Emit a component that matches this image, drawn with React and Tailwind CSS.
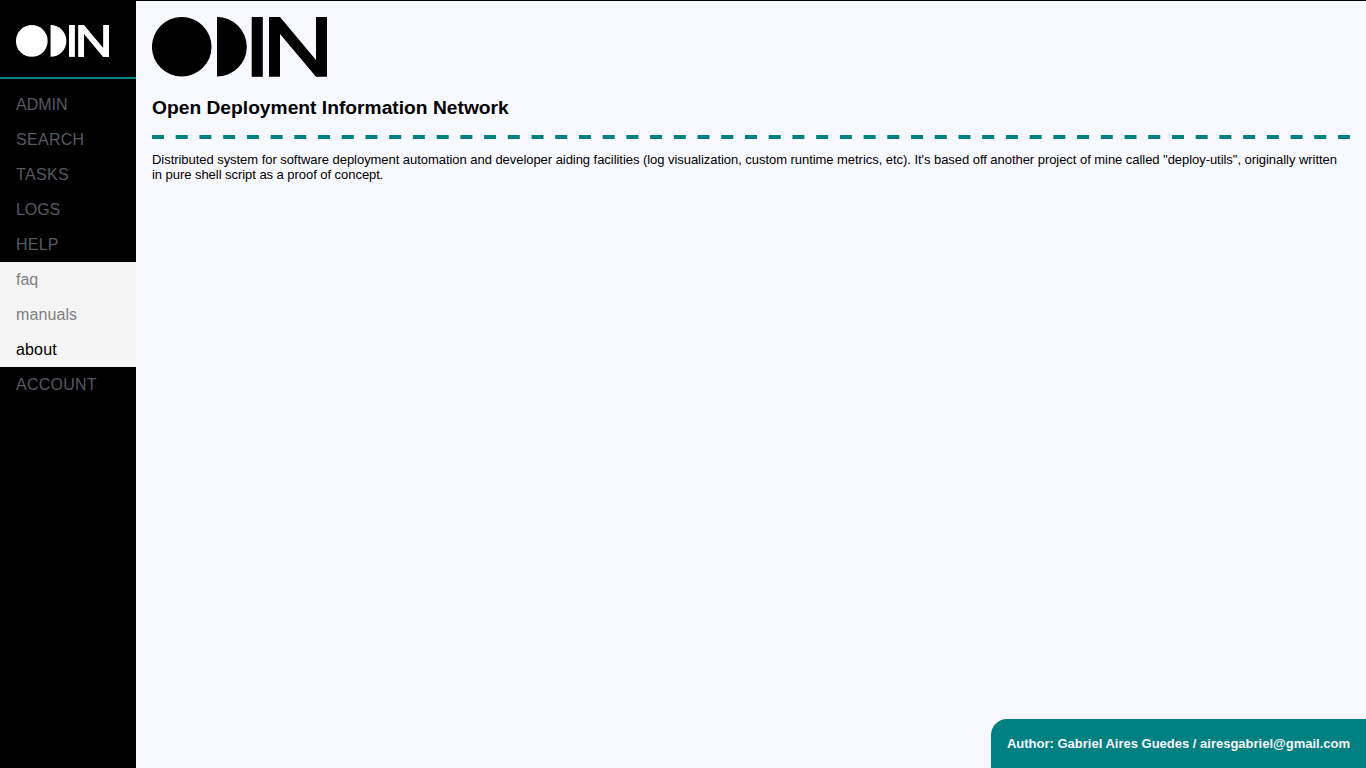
const topItems = [
  { label: 'ADMIN', tracking: 'tracking-normal' },
  { label: 'SEARCH', tracking: 'tracking-[0.3px]' },
  { label: 'TASKS', tracking: 'tracking-[0.35px]' },
  { label: 'LOGS', tracking: 'tracking-[-0.1px]' },
  { label: 'HELP', tracking: 'tracking-[0.2px]' },
];

function Logo({ className }) {
  return (
    <svg className={className} viewBox="0 0 175 60" preserveAspectRatio="none" fill="currentColor" aria-label="ODIN">
      <circle cx="29.75" cy="29.8" r="29.8" />
      <path d="M65 0a29.8 29.8 0 0 1 0 59.6z" />
      <path d="M99.7 0h11.1v59.8h-11.1z" />
      <path d="M117 0h11l36 43V0h11v59.8h-11L128 17v42.8h-11z" />
    </svg>
  );
}

function NavItem({ children, className }) {
  return <a className={`block h-[35px] px-4 text-base leading-[35px] ${className}`}>{children}</a>;
}

export default function App() {
  return (
    <div className="flex h-screen overflow-hidden bg-black font-['Liberation_Sans',Arial,sans-serif] text-black">
      <aside className="w-[136px] shrink-0 bg-black">
        <div className="h-[79px] border-b-2 border-[#008080] px-4 pt-[25px] text-white">
          <Logo className="h-8 w-[93px]" />
        </div>
        <nav className="pt-2">
          {topItems.map(({ label, tracking }) => (
            <NavItem key={label} className={`text-[#555a60] ${tracking}`}>{label}</NavItem>
          ))}
          <div className="bg-[#f5f5f5]">
            <NavItem className="text-[#808080]">faq</NavItem>
            <NavItem className="tracking-[0.1px] text-[#808080]">manuals</NavItem>
            <NavItem className="tracking-[0.15px] text-black">about</NavItem>
          </div>
          <NavItem className="tracking-[0.25px] text-[#555a60]">ACCOUNT</NavItem>
        </nav>
      </aside>
      <main className="mt-px flex flex-1 flex-col bg-[#f8f8ff]">
        <div className="flex-1 px-4 pt-4">
          <Logo className="h-[60px] w-[175px]" />
          <h1 className="mt-5 text-[19.2px] leading-[22px] font-bold tracking-[0.02px]">Open Deployment Information Network</h1>
          <svg className="mt-4 block h-1 w-full text-[#008080]" aria-hidden="true">
            <line x1="0" y1="2" x2="1198" y2="2" stroke="currentColor" strokeWidth="4" strokeDasharray="12 11.72" />
          </svg>
          <p className="mt-[13px] text-[13px] leading-[15px] tracking-[-0.047px]">
            Distributed system for software deployment automation and developer aiding facilities (log visualization, custom runtime metrics, etc). It's based off another project of mine called "deploy-utils", originally written in pure shell script as a proof of concept.
          </p>
        </div>
        <footer className="h-[49px] self-end rounded-tl-2xl bg-[#008080] px-4 text-[13px] leading-[49px] font-bold text-[#f8f8ff]">
          Author: Gabriel Aires Guedes / airesgabriel@gmail.com
        </footer>
      </main>
    </div>
  );
}
